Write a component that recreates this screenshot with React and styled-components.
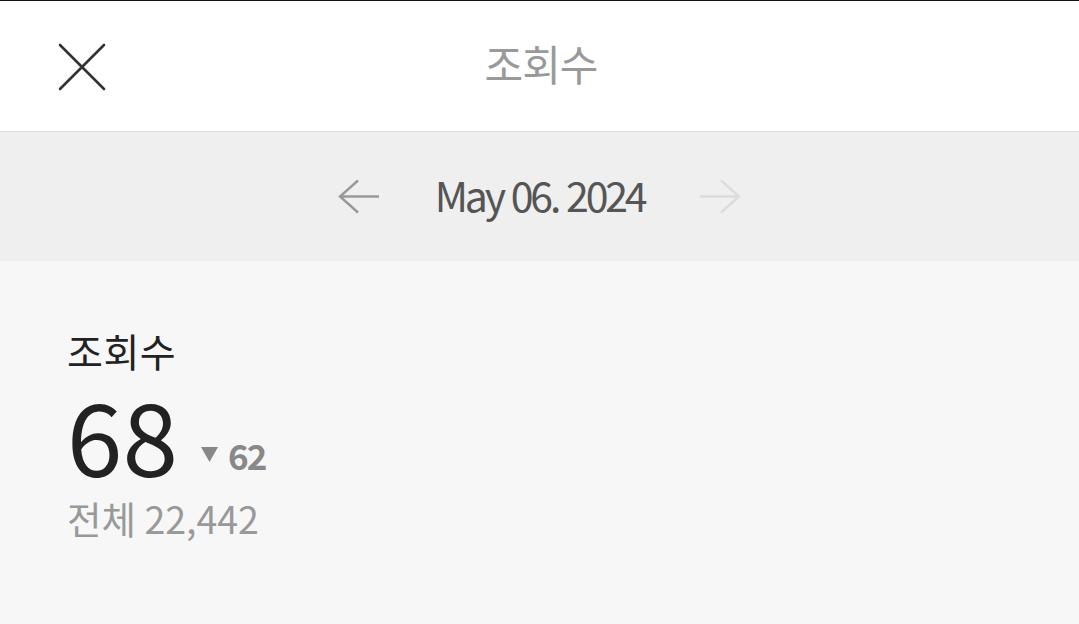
import styled, { createGlobalStyle } from "styled-components";

const GlobalStyle = createGlobalStyle`
  html, body {
    margin: 0;
    padding: 0;
    background: #f7f7f7;
  }
  body {
    font-family: "Noto Sans CJK KR", "Noto Sans", sans-serif;
  }
`;

const Page = styled.div`
  display: flex;
  flex-direction: column;
  min-height: 100vh;
  border-top: 1px solid #111;
  background: #f7f7f7;
`;

const Header = styled.header`
  position: relative;
  display: flex;
  align-items: center;
  justify-content: center;
  height: 130px;
  background: #fff;
  border-bottom: 1px solid #dedede;
`;

const CloseButton = styled.button`
  position: absolute;
  left: 58px;
  top: 42px;
  width: 48px;
  height: 48px;
  padding: 0;
  border: 0;
  background: none;
  display: flex;
`;

const Title = styled.h1`
  margin: 0;
  font-size: 42px;
  font-weight: 400;
  color: #999;
  letter-spacing: -1px;
  line-height: 1;
  padding: 0 0 6px 3px;
`;

const DateBar = styled.div`
  display: flex;
  align-items: center;
  justify-content: center;
  gap: 55px;
  height: 129px;
  background: #efefef;
`;

const ArrowButton = styled.button`
  width: 42px;
  height: 35px;
  padding: 0;
  border: 0;
  background: none;
  display: flex;
  color: ${(p) => (p.$disabled ? "#dcdcdc" : "#999")};
`;

const DateText = styled.div`
  font-size: 41px;
  color: #555;
  letter-spacing: -3.2px;
  word-spacing: 2px;
  line-height: 1;
  padding-bottom: 4px;
`;

const Stats = styled.section`
  display: flex;
  flex-direction: column;
  padding: 66px 67px;
`;

const Label = styled.div`
  font-size: 39px;
  color: #222;
  line-height: 1.2;
  letter-spacing: 0.5px;
`;

const ValueRow = styled.div`
  display: flex;
  align-items: flex-end;
  gap: 23px;
  margin-top: 10px;
`;

const BigValue = styled.div`
  font-size: 100px;
  font-weight: 400;
  color: #222;
  line-height: 1;
`;

const Change = styled.div`
  display: flex;
  align-items: center;
  gap: 10px;
  font-size: 35px;
  font-weight: 700;
  color: #888;
  letter-spacing: -2px;
  line-height: 1;
  padding-bottom: 12px;
`;

const Total = styled.div`
  font-size: 37.5px;
  color: #999;
  line-height: 1.2;
  margin-top: 11px;
`;

const Arrow = ({ dir }) => (
  <svg width="42" height="35" viewBox="0 0 42 35" fill="none" stroke="currentColor" strokeWidth="2.4">
    {dir === "left" ? (
      <path d="M41 17.5H2M20 1.5L2 17.5l18 16" />
    ) : (
      <path d="M1 17.5h39M22 1.5l18 16-18 16" />
    )}
  </svg>
);

export default function App() {
  return (
    <>
      <GlobalStyle />
      <Page>
        <Header>
          <CloseButton aria-label="닫기">
            <svg width="48" height="48" viewBox="0 0 48 48" stroke="#333" strokeWidth="2.6" strokeLinecap="round">
              <path d="M2 2l44 44M46 2L2 46" />
            </svg>
          </CloseButton>
          <Title>조회수</Title>
        </Header>
        <DateBar>
          <ArrowButton aria-label="이전">
            <Arrow dir="left" />
          </ArrowButton>
          <DateText>May 06. 2024</DateText>
          <ArrowButton $disabled aria-label="다음">
            <Arrow dir="right" />
          </ArrowButton>
        </DateBar>
        <Stats>
          <Label>조회수</Label>
          <ValueRow>
            <BigValue>68</BigValue>
            <Change>
              <svg width="17" height="15" viewBox="0 0 17 15">
                <path d="M0 0h17L8.5 15z" fill="#888" />
              </svg>
              62
            </Change>
          </ValueRow>
          <Total>전체 22,442</Total>
        </Stats>
      </Page>
    </>
  );
}
